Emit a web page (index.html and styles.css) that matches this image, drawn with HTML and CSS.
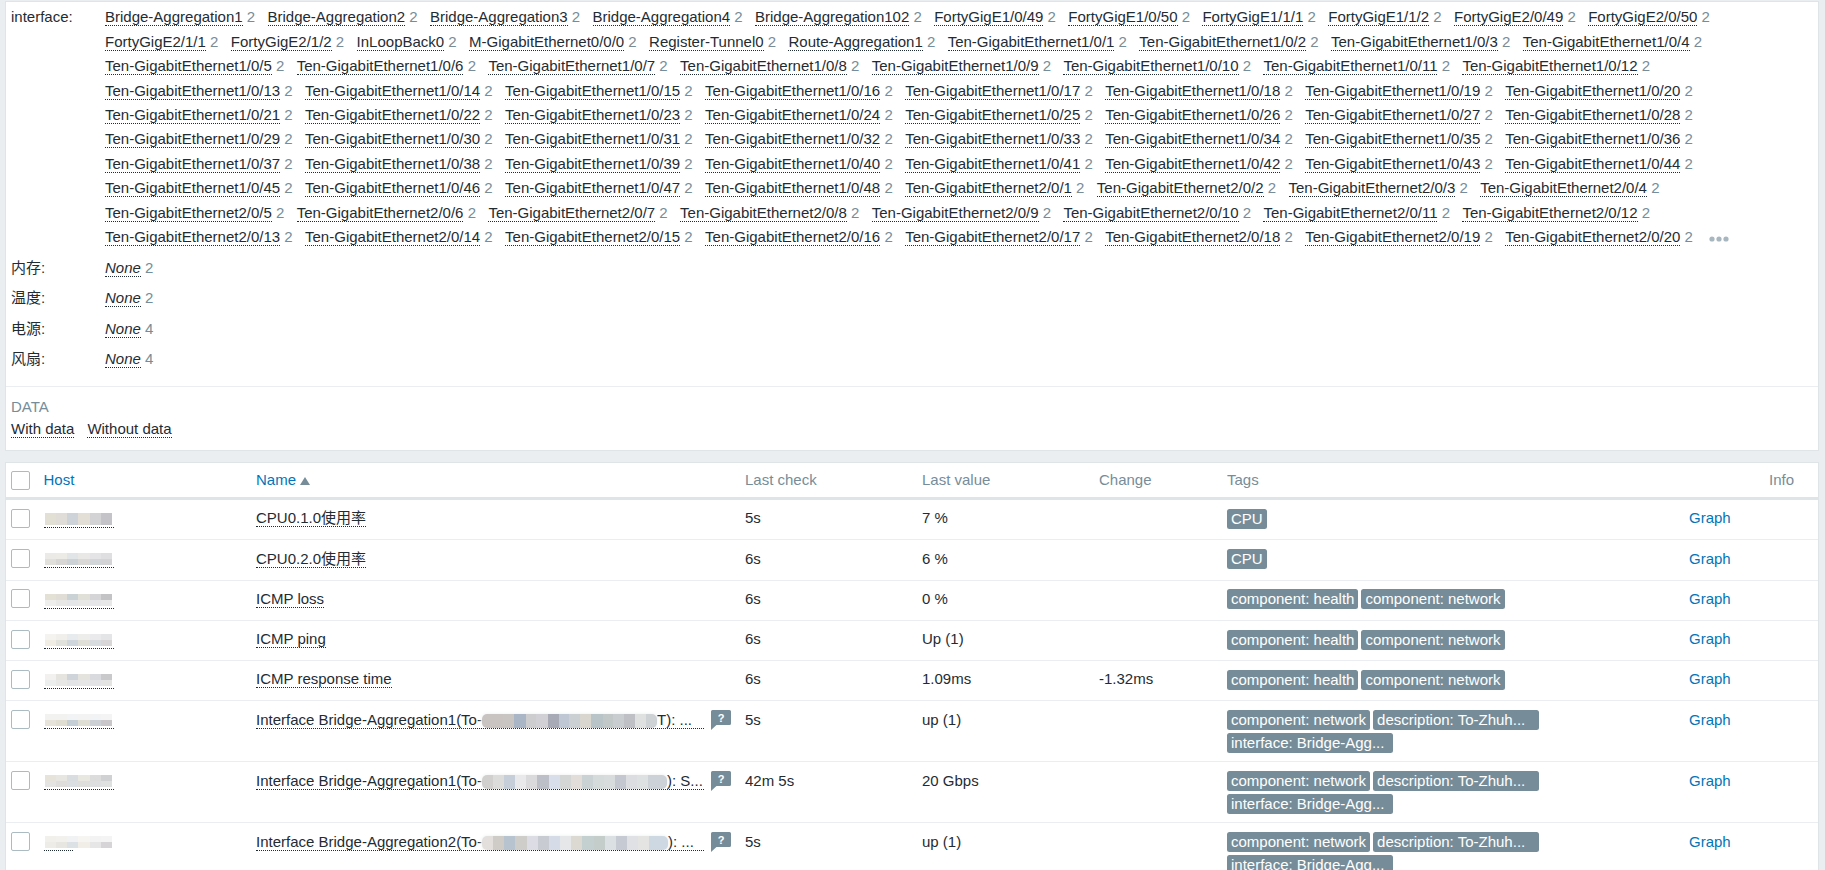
FILE: index.html
```html
<!DOCTYPE html>
<html lang="en">
<head>
<meta charset="utf-8">
<title>Latest data</title>
<link rel="stylesheet" href="styles.css">
</head>
<body>
<section class="panel filter">
  <div class="group">
    <div class="label">interface:</div>
    <ul class="values">
      <li><a href="#">Bridge-Aggregation1</a> <span class="n">2</span></li>
      <li><a href="#">Bridge-Aggregation2</a> <span class="n">2</span></li>
      <li><a href="#">Bridge-Aggregation3</a> <span class="n">2</span></li>
      <li><a href="#">Bridge-Aggregation4</a> <span class="n">2</span></li>
      <li><a href="#">Bridge-Aggregation102</a> <span class="n">2</span></li>
      <li><a href="#">FortyGigE1/0/49</a> <span class="n">2</span></li>
      <li><a href="#">FortyGigE1/0/50</a> <span class="n">2</span></li>
      <li><a href="#">FortyGigE1/1/1</a> <span class="n">2</span></li>
      <li><a href="#">FortyGigE1/1/2</a> <span class="n">2</span></li>
      <li><a href="#">FortyGigE2/0/49</a> <span class="n">2</span></li>
      <li><a href="#">FortyGigE2/0/50</a> <span class="n">2</span></li>
      <li><a href="#">FortyGigE2/1/1</a> <span class="n">2</span></li>
      <li><a href="#">FortyGigE2/1/2</a> <span class="n">2</span></li>
      <li><a href="#">InLoopBack0</a> <span class="n">2</span></li>
      <li><a href="#">M-GigabitEthernet0/0/0</a> <span class="n">2</span></li>
      <li><a href="#">Register-Tunnel0</a> <span class="n">2</span></li>
      <li><a href="#">Route-Aggregation1</a> <span class="n">2</span></li>
      <li><a href="#">Ten-GigabitEthernet1/0/1</a> <span class="n">2</span></li>
      <li><a href="#">Ten-GigabitEthernet1/0/2</a> <span class="n">2</span></li>
      <li><a href="#">Ten-GigabitEthernet1/0/3</a> <span class="n">2</span></li>
      <li><a href="#">Ten-GigabitEthernet1/0/4</a> <span class="n">2</span></li>
      <li><a href="#">Ten-GigabitEthernet1/0/5</a> <span class="n">2</span></li>
      <li><a href="#">Ten-GigabitEthernet1/0/6</a> <span class="n">2</span></li>
      <li><a href="#">Ten-GigabitEthernet1/0/7</a> <span class="n">2</span></li>
      <li><a href="#">Ten-GigabitEthernet1/0/8</a> <span class="n">2</span></li>
      <li><a href="#">Ten-GigabitEthernet1/0/9</a> <span class="n">2</span></li>
      <li><a href="#">Ten-GigabitEthernet1/0/10</a> <span class="n">2</span></li>
      <li><a href="#">Ten-GigabitEthernet1/0/11</a> <span class="n">2</span></li>
      <li><a href="#">Ten-GigabitEthernet1/0/12</a> <span class="n">2</span></li>
      <li><a href="#">Ten-GigabitEthernet1/0/13</a> <span class="n">2</span></li>
      <li><a href="#">Ten-GigabitEthernet1/0/14</a> <span class="n">2</span></li>
      <li><a href="#">Ten-GigabitEthernet1/0/15</a> <span class="n">2</span></li>
      <li><a href="#">Ten-GigabitEthernet1/0/16</a> <span class="n">2</span></li>
      <li><a href="#">Ten-GigabitEthernet1/0/17</a> <span class="n">2</span></li>
      <li><a href="#">Ten-GigabitEthernet1/0/18</a> <span class="n">2</span></li>
      <li><a href="#">Ten-GigabitEthernet1/0/19</a> <span class="n">2</span></li>
      <li><a href="#">Ten-GigabitEthernet1/0/20</a> <span class="n">2</span></li>
      <li><a href="#">Ten-GigabitEthernet1/0/21</a> <span class="n">2</span></li>
      <li><a href="#">Ten-GigabitEthernet1/0/22</a> <span class="n">2</span></li>
      <li><a href="#">Ten-GigabitEthernet1/0/23</a> <span class="n">2</span></li>
      <li><a href="#">Ten-GigabitEthernet1/0/24</a> <span class="n">2</span></li>
      <li><a href="#">Ten-GigabitEthernet1/0/25</a> <span class="n">2</span></li>
      <li><a href="#">Ten-GigabitEthernet1/0/26</a> <span class="n">2</span></li>
      <li><a href="#">Ten-GigabitEthernet1/0/27</a> <span class="n">2</span></li>
      <li><a href="#">Ten-GigabitEthernet1/0/28</a> <span class="n">2</span></li>
      <li><a href="#">Ten-GigabitEthernet1/0/29</a> <span class="n">2</span></li>
      <li><a href="#">Ten-GigabitEthernet1/0/30</a> <span class="n">2</span></li>
      <li><a href="#">Ten-GigabitEthernet1/0/31</a> <span class="n">2</span></li>
      <li><a href="#">Ten-GigabitEthernet1/0/32</a> <span class="n">2</span></li>
      <li><a href="#">Ten-GigabitEthernet1/0/33</a> <span class="n">2</span></li>
      <li><a href="#">Ten-GigabitEthernet1/0/34</a> <span class="n">2</span></li>
      <li><a href="#">Ten-GigabitEthernet1/0/35</a> <span class="n">2</span></li>
      <li><a href="#">Ten-GigabitEthernet1/0/36</a> <span class="n">2</span></li>
      <li><a href="#">Ten-GigabitEthernet1/0/37</a> <span class="n">2</span></li>
      <li><a href="#">Ten-GigabitEthernet1/0/38</a> <span class="n">2</span></li>
      <li><a href="#">Ten-GigabitEthernet1/0/39</a> <span class="n">2</span></li>
      <li><a href="#">Ten-GigabitEthernet1/0/40</a> <span class="n">2</span></li>
      <li><a href="#">Ten-GigabitEthernet1/0/41</a> <span class="n">2</span></li>
      <li><a href="#">Ten-GigabitEthernet1/0/42</a> <span class="n">2</span></li>
      <li><a href="#">Ten-GigabitEthernet1/0/43</a> <span class="n">2</span></li>
      <li><a href="#">Ten-GigabitEthernet1/0/44</a> <span class="n">2</span></li>
      <li><a href="#">Ten-GigabitEthernet1/0/45</a> <span class="n">2</span></li>
      <li><a href="#">Ten-GigabitEthernet1/0/46</a> <span class="n">2</span></li>
      <li><a href="#">Ten-GigabitEthernet1/0/47</a> <span class="n">2</span></li>
      <li><a href="#">Ten-GigabitEthernet1/0/48</a> <span class="n">2</span></li>
      <li><a href="#">Ten-GigabitEthernet2/0/1</a> <span class="n">2</span></li>
      <li><a href="#">Ten-GigabitEthernet2/0/2</a> <span class="n">2</span></li>
      <li><a href="#">Ten-GigabitEthernet2/0/3</a> <span class="n">2</span></li>
      <li><a href="#">Ten-GigabitEthernet2/0/4</a> <span class="n">2</span></li>
      <li><a href="#">Ten-GigabitEthernet2/0/5</a> <span class="n">2</span></li>
      <li><a href="#">Ten-GigabitEthernet2/0/6</a> <span class="n">2</span></li>
      <li><a href="#">Ten-GigabitEthernet2/0/7</a> <span class="n">2</span></li>
      <li><a href="#">Ten-GigabitEthernet2/0/8</a> <span class="n">2</span></li>
      <li><a href="#">Ten-GigabitEthernet2/0/9</a> <span class="n">2</span></li>
      <li><a href="#">Ten-GigabitEthernet2/0/10</a> <span class="n">2</span></li>
      <li><a href="#">Ten-GigabitEthernet2/0/11</a> <span class="n">2</span></li>
      <li><a href="#">Ten-GigabitEthernet2/0/12</a> <span class="n">2</span></li>
      <li><a href="#">Ten-GigabitEthernet2/0/13</a> <span class="n">2</span></li>
      <li><a href="#">Ten-GigabitEthernet2/0/14</a> <span class="n">2</span></li>
      <li><a href="#">Ten-GigabitEthernet2/0/15</a> <span class="n">2</span></li>
      <li><a href="#">Ten-GigabitEthernet2/0/16</a> <span class="n">2</span></li>
      <li><a href="#">Ten-GigabitEthernet2/0/17</a> <span class="n">2</span></li>
      <li><a href="#">Ten-GigabitEthernet2/0/18</a> <span class="n">2</span></li>
      <li><a href="#">Ten-GigabitEthernet2/0/19</a> <span class="n">2</span></li>
      <li><a href="#">Ten-GigabitEthernet2/0/20</a> <span class="n">2</span></li>
      <li class="more"><svg width="20" height="6" viewBox="0 0 20 6"><circle cx="3" cy="3" r="2.6"/><circle cx="10" cy="3" r="2.6"/><circle cx="17" cy="3" r="2.6"/></svg></li>
    </ul>
  </div>
  <div class="group"><div class="label">内存:</div><ul class="values"><li><a href="#"><em>None</em></a> <span class="n">2</span></li></ul></div>
  <div class="group"><div class="label">温度:</div><ul class="values"><li><a href="#"><em>None</em></a> <span class="n">2</span></li></ul></div>
  <div class="group"><div class="label">电源:</div><ul class="values"><li><a href="#"><em>None</em></a> <span class="n">4</span></li></ul></div>
  <div class="group"><div class="label">风扇:</div><ul class="values"><li><a href="#"><em>None</em></a> <span class="n">4</span></li></ul></div>
  <div class="data">
    <div class="data-title">DATA</div>
    <div class="data-links"><a href="#">With data</a><a href="#">Without data</a></div>
  </div>
</section>

<section class="panel results">
  <table>
    <colgroup>
      <col class="c-check"><col class="c-host"><col class="c-name"><col class="c-last"><col class="c-value"><col class="c-change"><col class="c-tags"><col class="c-graph"><col class="c-info">
    </colgroup>
    <thead>
      <tr>
        <th><span class="box"></span></th>
        <th><a class="sort" href="#">Host</a></th>
        <th><a class="sort" href="#">Name</a><span class="arrow"></span></th>
        <th>Last check</th>
        <th>Last value</th>
        <th>Change</th>
        <th>Tags</th>
        <th></th>
        <th>Info</th>
      </tr>
    </thead>
    <tbody>
      <tr>
        <td><span class="box"></span></td>
        <td><a class="host h1" href="#"></a></td>
        <td><a href="#">CPU0.1.0使用率</a></td>
        <td>5s</td><td>7 %</td><td></td>
        <td><div class="tags"><span class="tag">CPU</span></div></td>
        <td><a class="graph" href="#">Graph</a></td><td></td>
      </tr>
      <tr class="low">
        <td><span class="box"></span></td>
        <td><a class="host h2" href="#"></a></td>
        <td><a href="#">CPU0.2.0使用率</a></td>
        <td>6s</td><td>6 %</td><td></td>
        <td><div class="tags"><span class="tag">CPU</span></div></td>
        <td><a class="graph" href="#">Graph</a></td><td></td>
      </tr>
      <tr>
        <td><span class="box"></span></td>
        <td><a class="host h3" href="#"></a></td>
        <td><a href="#">ICMP loss</a></td>
        <td>6s</td><td>0 %</td><td></td>
        <td><div class="tags"><span class="tag">component: health</span><span class="tag">component: network</span></div></td>
        <td><a class="graph" href="#">Graph</a></td><td></td>
      </tr>
      <tr>
        <td><span class="box"></span></td>
        <td><a class="host h4" href="#"></a></td>
        <td><a href="#">ICMP ping</a></td>
        <td>6s</td><td>Up (1)</td><td></td>
        <td><div class="tags"><span class="tag">component: health</span><span class="tag">component: network</span></div></td>
        <td><a class="graph" href="#">Graph</a></td><td></td>
      </tr>
      <tr>
        <td><span class="box"></span></td>
        <td><a class="host h5" href="#"></a></td>
        <td><a href="#">ICMP response time</a></td>
        <td>6s</td><td>1.09ms</td><td>-1.32ms</td>
        <td><div class="tags"><span class="tag">component: health</span><span class="tag">component: network</span></div></td>
        <td><a class="graph" href="#">Graph</a></td><td></td>
      </tr>
      <tr class="tall low">
        <td><span class="box"></span></td>
        <td><a class="host h6" href="#"></a></td>
        <td><div class="name-cell"><a class="long" href="#">Interface Bridge-Aggregation1(To-<span class="blur b1"></span>T): ...</a>
          <svg class="help" width="20" height="20" viewBox="0 0 20 20"><path d="M1.5 0h17a1.500 1.500 0 0 1 1.500 1.500v12a1.500 1.500 0 0 1-1.500 1.500h-13l-5.500 5v-18.500a1.500 1.500 0 0 1 1.500-1.500z"/><text x="10" y="11.500">?</text></svg></div></td>
        <td>5s</td><td>up (1)</td><td></td>
        <td><div class="tags"><span class="tag">component: network</span><span class="tag wide">description: To-Zhuh...</span><span class="tag mid">interface: Bridge-Agg...</span></div></td>
        <td><a class="graph" href="#">Graph</a></td><td></td>
      </tr>
      <tr class="tall low">
        <td><span class="box"></span></td>
        <td><a class="host h7" href="#"></a></td>
        <td><div class="name-cell"><a class="long" href="#">Interface Bridge-Aggregation1(To-<span class="blur b2"></span>): S...</a>
          <svg class="help" width="20" height="20" viewBox="0 0 20 20"><path d="M1.5 0h17a1.500 1.500 0 0 1 1.500 1.500v12a1.500 1.500 0 0 1-1.500 1.500h-13l-5.500 5v-18.500a1.500 1.500 0 0 1 1.500-1.500z"/><text x="10" y="11.500">?</text></svg></div></td>
        <td>42m 5s</td><td>20 Gbps</td><td></td>
        <td><div class="tags"><span class="tag">component: network</span><span class="tag wide">description: To-Zhuh...</span><span class="tag mid">interface: Bridge-Agg...</span></div></td>
        <td><a class="graph" href="#">Graph</a></td><td></td>
      </tr>
      <tr class="tall low">
        <td><span class="box"></span></td>
        <td><a class="host h8" href="#"></a></td>
        <td><div class="name-cell"><a class="long" href="#">Interface Bridge-Aggregation2(To-<span class="blur b3"></span>): ...</a>
          <svg class="help" width="20" height="20" viewBox="0 0 20 20"><path d="M1.5 0h17a1.500 1.500 0 0 1 1.500 1.500v12a1.500 1.500 0 0 1-1.500 1.500h-13l-5.500 5v-18.500a1.500 1.500 0 0 1 1.500-1.500z"/><text x="10" y="11.500">?</text></svg></div></td>
        <td>5s</td><td>up (1)</td><td></td>
        <td><div class="tags"><span class="tag">component: network</span><span class="tag wide">description: To-Zhuh...</span><span class="tag mid">interface: Bridge-Agg...</span></div></td>
        <td><a class="graph" href="#">Graph</a></td><td></td>
      </tr>
    </tbody>
  </table>
</section>
</body>
</html>
```
FILE: styles.css
```css
* { box-sizing: border-box; }
html, body { height: 870px; overflow: hidden; }
body {
  margin: 0;
  padding: 1px 6px 0 5px;
  background: #ebeef0;
  color: #1f2c33;
  font: 15px/17.5px "Liberation Sans", "Noto Sans CJK SC", sans-serif;
}
a { color: inherit; text-decoration: none; }

.panel { background: #fff; border: 1px solid #dfe4e7; }

/* filter */
.filter { height: 450px; padding: 3px 0 0; }
.group { display: flex; margin-bottom: 6.2px; }
.label { width: 99px; padding: 3.45px 0 0 5px; flex: none; }
.values { display: flex; flex-wrap: wrap; list-style: none; margin: 0; padding: 0; flex: 1; }
.values li { height: 24.4px; padding-top: 3.45px; margin-right: 12.4px; white-space: nowrap; }
.values a { border-bottom: 1px dotted #1f2c33; padding-bottom: 0; }
.values em { font-style: italic; }
.n { color: #768d99; }
.more { padding-left: 4px; }
.more svg { fill: #a8b7bf; display: block; margin-top: 8px; }

.data { border-top: 1px solid #ebeef0; margin-top: 15px; padding: 11px 5px 0; }
.data-title { color: #768d99; }
.data-links { display: flex; gap: 13px; margin-top: 4px; }
.data-links a { border-bottom: 1px dotted #1f2c33; }

/* results */
.results { margin-top: 11px; }
table { border-collapse: separate; border-spacing: 0; table-layout: fixed; width: 1812px; }
.c-check { width: 32.5px; }
.c-host { width: 212.5px; }
.c-name { width: 489px; }
.c-last { width: 177px; }
.c-value { width: 177px; }
.c-change { width: 128px; }
.c-tags { width: 462px; }
.c-graph { width: 80px; }
.c-info { width: 54px; }

th {
  height: 37px;
  padding: 0 5px;
  text-align: left;
  font-weight: 400;
  color: #768d99;
  border-bottom: 3px solid #dfe4e7;
  vertical-align: middle;
}
td {
  --nudge: 0.35px;
  padding: 9.1px 5px 0;
  vertical-align: top;
  border-bottom: 1px solid #ebeef0;
}
tbody tr { height: 40.25px; }
tbody tr.tall { height: 61px; }
tr.low td { --nudge: 0.95px; padding-top: 9.7px; }
td a { border-bottom: 1px dotted #1f2c33; }

.sort { color: #0275b8; }
.arrow {
  display: inline-block;
  margin-left: 4px;
  border-left: 5px solid transparent;
  border-right: 5px solid transparent;
  border-bottom: 8px solid #768d99;
}
.box {
  display: block;
  width: 19px;
  height: 19px;
  background: #fff;
  border: 1px solid #acbbc2;
  border-radius: 2px;
}
td .box { margin-top: calc(0px - var(--nudge)); }
td a.graph { color: #0275b8; border: 0; }

.host {
  display: block;
  width: 70px;
  height: 19.15px;
  margin-top: calc(0.35px - var(--nudge));
  background-repeat: no-repeat;
  background-size: 67px 6px, 67px 6px;
  background-position: 1px 4px, 1px 10px;
}
.h1 { background-image: linear-gradient(90deg,#e2dfd5 0 17%,#e0ddd9 17% 33%,#cdd3d8 33% 50%,#e3dfd6 50% 67%,#d3d2d4 67% 83%,#c4c3c8 83%), linear-gradient(90deg,#e2dfd5 0 17%,#e0ddd9 17% 33%,#cdd3d8 33% 50%,#e3dfd6 50% 67%,#d3d2d4 67% 83%,#c4c3c8 83%); }
.h2 { background-image: linear-gradient(90deg,#ebeae6 0 17%,#ecebe6 17% 33%,#e2e5e8 33% 50%,#e9e8e6 50% 67%,#e4e4e6 67% 83%,#dfdfe2 83%), linear-gradient(90deg,#e2e0da 0 17%,#d8d7d5 17% 33%,#ccd2d6 33% 50%,#dbd9d7 50% 67%,#d3d6d9 67% 83%,#d4d3d6 83%); }
.h3 { background-image: linear-gradient(90deg,#e3e0d6 0 17%,#e0ddd6 17% 33%,#cbd2d6 33% 50%,#e0e0d9 50% 67%,#d5d5d8 67% 83%,#c3c3c6 83%), linear-gradient(90deg,#eeeeec 0 17%,#e8e8e6 17% 33%,#e4e6e8 33% 50%,#e8e8e7 50% 67%,#e6e6e8 67% 83%,#e8e8e8 83%); }
.h4 { background-image: linear-gradient(90deg,#f4f3ef 0 17%,#f0efec 17% 33%,#e8ebee 33% 50%,#ededeb 50% 67%,#eaeaec 67% 83%,#e4e5e6 83%), linear-gradient(90deg,#f0ede5 0 17%,#e2e2dd 17% 33%,#cfd6dc 33% 50%,#e0e0d9 50% 67%,#d8dcde 67% 83%,#d9d6d8 83%); }
.h5 { background-image: linear-gradient(90deg,#f2f1ef 0 17%,#e6e4df 17% 33%,#cfd4da 33% 50%,#e4e3dd 50% 67%,#d9dadd 67% 83%,#c9c9cc 83%), linear-gradient(90deg,#eceded 0 17%,#e8e8e6 17% 33%,#e2e4e6 33% 50%,#e5e6e5 50% 67%,#e3e3e5 67% 83%,#e4e4e3 83%); }
.h6 { background-image: linear-gradient(90deg,#f2f2f0 0 17%,#f2f2f0 17% 33%,#f1f3f5 33% 50%,#f3f3f3 50% 67%,#f2f3f4 67% 83%,#f4f4f4 83%), linear-gradient(90deg,#e6e3da 0 17%,#e0ddd2 17% 33%,#c6ced6 33% 50%,#e0dfd6 50% 67%,#cdd1d6 67% 83%,#c9c7ca 83%); }
.h7 { background-image: linear-gradient(90deg,#e6e3da 0 17%,#e8e6e0 17% 33%,#d9dde0 33% 50%,#e8e7e0 50% 67%,#dcdcdc 67% 83%,#d0d1d2 83%), linear-gradient(90deg,#e4e4e2 0 17%,#dedddb 17% 33%,#dbdfe2 33% 50%,#dedfdc 50% 67%,#dcdedf 67% 83%,#dfe0e0 83%); }
a.h8 {
  border-bottom: 0;
  background-image: linear-gradient(90deg,#f2f0ea 0 17%,#f2f1ed 17% 33%,#f0f2f4 33% 50%,#f6f5f2 50% 67%,#f3f3f3 67% 83%,#f4f4f4 83%), linear-gradient(90deg,#eeece6 0 17%,#e8e6e0 17% 33%,#dce1e6 33% 50%,#f0eee6 50% 67%,#e6e6e6 67% 83%,#d6d4d6 83%), repeating-linear-gradient(90deg,#1f2c33 0 1px,transparent 1px 2px);
  background-size: 67px 6px, 67px 6px, 30px 1px;
  background-position: 1px 4px, 1px 10px, 0 18px;
}

.name-cell { display: flex; align-items: flex-start; margin-top: calc(0px - var(--nudge)); }
.long { display: block; width: 448px; white-space: nowrap; overflow: hidden; height: 19px; flex: none; padding-top: var(--nudge); }
.help { flex: none; margin-left: 7px; fill: #768d99; }
.help text { fill: #fff; font: 700 11px "Liberation Sans", sans-serif; text-anchor: middle; }
.blur {
  display: inline-block;
  height: 14px;
  vertical-align: -3px;
  border-radius: 5px;
  box-shadow: 0 0 3px 1px #f4f5f6;
  background-repeat: no-repeat;
}
.b1 {
  width: 175px;
  background-image: linear-gradient(90deg,#c9c4c2 0 12%,#c8c5c3 12% 18.500%,#aab6c6 18.500% 25%,#cdcdd0 25% 31%,#d0d0d5 31% 37.500%,#a8abb5 37.500% 44%,#bfc7d4 44% 50%,#cbd1d3 50% 56%,#d9d5cf 56% 62.500%,#b9c4c8 62.500% 69%,#c2c8c7 69% 75%,#cacdd0 75% 81%,#bec0c6 81% 87.500%,#dfe1e0 87.500% 94%,#cfd2d5 94%);
}
.b2 {
  width: 185px;
  background-image: linear-gradient(90deg,#d2d0ce 0 6%,#dcdcda 6% 12%,#c6ceda 12% 18%,#e9e8ea 18% 24%,#dadadc 24% 30%,#bcbfc8 30% 36%,#d8deea 36% 42%,#d4d6d6 42% 48%,#e2ddd8 48% 54%,#cad2d4 54% 60%,#d4dbda 60% 66%,#d8dcdc 66% 72%,#c4c7d0 72% 78%,#dcdde0 78% 84%,#dde1e2 84% 90%,#ccd2d8 90%);
}
.b3 {
  width: 186px;
  background-image: linear-gradient(90deg,#e2dfdd 0 6%,#cfccc8 6% 12%,#b8c3d0 12% 18%,#cfcdc9 18% 24%,#dcdde4 24% 30%,#c9cbd2 30% 36%,#d5dbe7 36% 42%,#e6e7e8 42% 48%,#dcd9d3 48% 54%,#c4cfd0 54% 60%,#c5cdcb 60% 66%,#dbe0e2 66% 72%,#c6cad3 72% 78%,#dfe1e4 78% 84%,#e4e4e2 84% 90%,#ced8e2 90%);
}

.tags { display: flex; flex-wrap: wrap; gap: 3px 3px; width: 320px; margin-top: calc(0px - var(--nudge)); }
.tag {
  height: 20px;
  padding: 0 4px;
  line-height: 20px;
  color: #fff;
  background: #768d99;
  border-radius: 2.5px;
  white-space: nowrap;
}
.tag.wide { width: 166px; }
.tag.mid { width: 166px; }
```
